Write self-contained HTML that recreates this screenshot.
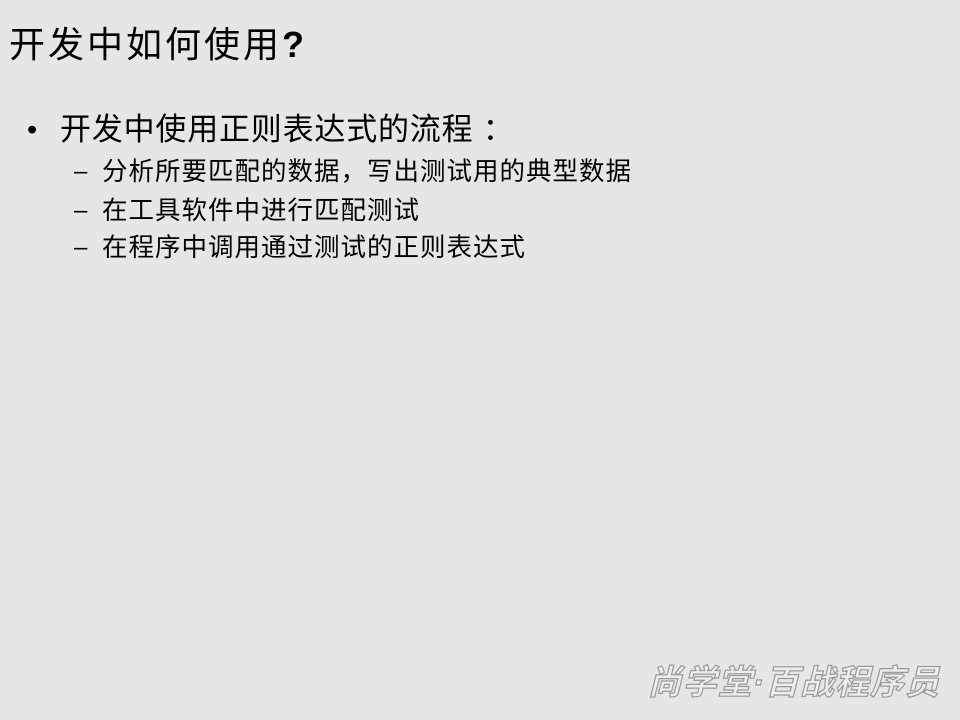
<!DOCTYPE html>
<html><head><meta charset="utf-8"><style>
body{margin:0;width:960px;height:720px;background:#e6e6e6;position:relative;overflow:hidden;font-family:"Liberation Sans","Noto Sans CJK SC",sans-serif;color:#000}
div{position:absolute;white-space:nowrap}
.t{left:9px;top:22px;font-size:36px;letter-spacing:3px;line-height:46px}
.b{left:60px;top:110px;font-size:31px;letter-spacing:0.8px;line-height:40px}
.d{left:27px;top:111px;font-size:29px;line-height:38px}
.s{left:102px;font-size:25.5px;letter-spacing:1px;line-height:32px}
.sd{left:74px;font-size:24px;line-height:32px}
.logo{right:20px;top:655px;font-size:34px;font-weight:bold;color:#eee;-webkit-text-stroke:1.2px #999;letter-spacing:1px;font-style:italic}
</style></head><body>
<div class="t">开发中如何使用<b>?</b></div>
<div class="d">•</div>
<div class="b">开发中使用正则表达式的流程 ：</div>
<div class="sd" style="top:156px">–</div><div class="s" style="top:156px">分析所要匹配的数据，写出测试用的典型数据</div>
<div class="sd" style="top:195px">–</div><div class="s" style="top:195px">在工具软件中进行匹配测试</div>
<div class="sd" style="top:232px">–</div><div class="s" style="top:232px">在程序中调用通过测试的正则表达式</div>
<div class="logo">尚学堂·百战程序员</div>
</body></html>
